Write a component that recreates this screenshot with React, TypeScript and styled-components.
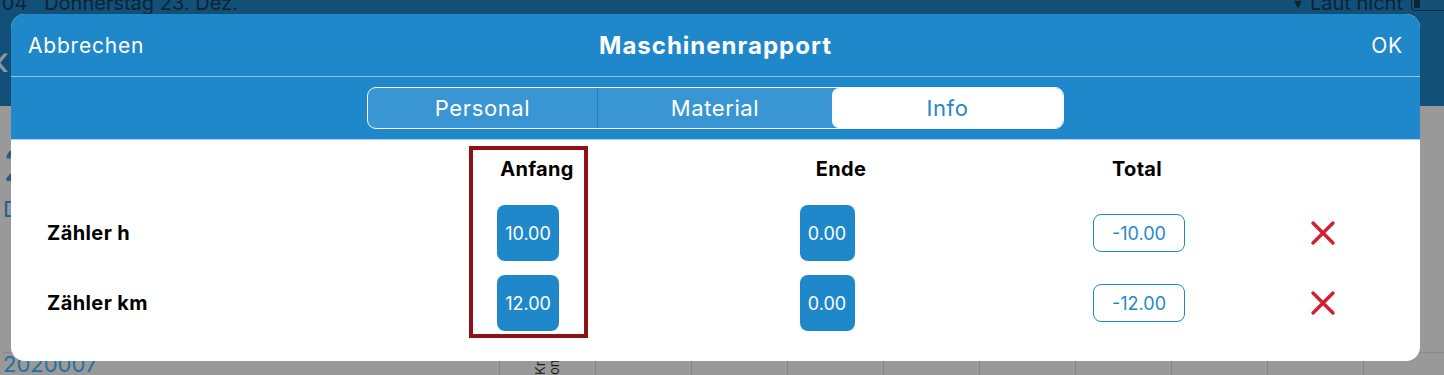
import styled, { createGlobalStyle } from "styled-components";

const GlobalStyle = createGlobalStyle`
  html, body {
    margin: 0;
    padding: 0;
    background: #999999;
    font-family: Inter, "Noto Sans", sans-serif;
  }
`;

const BLUE = "#1f88ca";

type Counter = {
  label: string;
  start: string;
  end: string;
  total: string;
};

const counters: Counter[] = [
  { label: "Zähler h", start: "10.00", end: "0.00", total: "-10.00" },
  { label: "Zähler km", start: "12.00", end: "0.00", total: "-12.00" },
];

const tabs = ["Personal", "Material", "Info"];

function CloseIcon() {
  return (
    <svg width="26" height="26" viewBox="0 0 26 26">
      <path
        d="M3 3 L23 23 M23 3 L3 23"
        stroke="#d3202f"
        strokeWidth="3.4"
        strokeLinecap="round"
      />
    </svg>
  );
}

export default function App() {
  return (
    <>
      <GlobalStyle />
      <Screen>
        <TopBar>
          <StatusRow>
            <StatusText>:04&nbsp;&nbsp;&nbsp;Donnerstag 23. Dez.</StatusText>
            <StatusText>
              <SilentIcon>▾</SilentIcon> Laut nicht <Battery />
            </StatusText>
          </StatusRow>
          <BackChevron>‹</BackChevron>
        </TopBar>
        <BackContent>
          <BackBig>2</BackBig>
          <BackSmall>D</BackSmall>
          <BackFooter>
            <BackNumber>2020007</BackNumber>
            {Array.from({ length: 10 }).map((_, i) => (
              <BackCell key={i}>
                {i === 0 && <VerticalLabel>Kra on</VerticalLabel>}
              </BackCell>
            ))}
          </BackFooter>
        </BackContent>

        <Modal>
          <Header>
            <HeaderButton>Abbrechen</HeaderButton>
            <Title>Maschinenrapport</Title>
            <HeaderButton $right>OK</HeaderButton>
          </Header>
          <TabBar>
            <Segmented>
              {tabs.map((t, i) => (
                <Segment key={t} $active={t === "Info"} $divider={i === 0}>
                  {t}
                </Segment>
              ))}
            </Segmented>
          </TabBar>
          <Body>
            <Highlight />
            <ColHead $col={2} $shift={9}>
              Anfang
            </ColHead>
            <ColHead $col={3} $shift={14}>
              Ende
            </ColHead>
            <ColHead $col={4} $shift={-2}>
              Total
            </ColHead>
            {counters.map((c, i) => (
              <Row key={c.label}>
                <RowLabel $row={i + 2}>{c.label}</RowLabel>
                <Cell $row={i + 2} $col={2}>
                  <ValueBox>{c.start}</ValueBox>
                </Cell>
                <Cell $row={i + 2} $col={3}>
                  <ValueBox>{c.end}</ValueBox>
                </Cell>
                <Cell $row={i + 2} $col={4}>
                  <TotalBox>{c.total}</TotalBox>
                </Cell>
                <Cell $row={i + 2} $col={5} $shift={5}>
                  <CloseIcon />
                </Cell>
              </Row>
            ))}
          </Body>
        </Modal>
      </Screen>
    </>
  );
}

const Screen = styled.div`
  position: relative;
  width: 1444px;
  height: 375px;
  overflow: hidden;
  display: flex;
  flex-direction: column;
`;

const TopBar = styled.div`
  height: 106px;
  flex-shrink: 0;
  background: #135078;
  display: flex;
  flex-direction: column;
`;

const StatusRow = styled.div`
  display: flex;
  justify-content: space-between;
  height: 14px;
  overflow: hidden;
`;

const StatusText = styled.div`
  font-size: 20px;
  color: #0b2436;
  margin-top: -8px;
  display: flex;
  gap: 6px;
  align-items: center;
  margin-left: -4px;
  white-space: nowrap;
`;

const SilentIcon = styled.span`
  font-size: 16px;
  margin-right: 2px;
`;

const Battery = styled.span`
  display: inline-block;
  flex-shrink: 0;
  width: 60px;
  height: 14px;
  margin-right: -29px;
  margin-left: 2px;
  border: 1.5px solid #0b2436;
  border-radius: 4px;
  position: relative;
  &::before {
    content: "";
    position: absolute;
    left: 2px;
    top: 2px;
    width: 6px;
    height: 10px;
    border-radius: 1px;
    background: #0b2436;
  }
`;

const BackChevron = styled.div`
  margin: 32px 0 0 -6px;
  font-size: 40px;
  line-height: 30px;
  color: #8c9aa6;
`;

const BackContent = styled.div`
  flex: 1;
  background: #999999;
  display: flex;
  flex-direction: column;
  padding-left: 3px;
`;

const BackBig = styled.div`
  font-size: 44px;
  color: #1f5f8c;
  margin-top: 34px;
  line-height: 50px;
`;

const BackSmall = styled.div`
  font-size: 22px;
  color: #1f5f8c;
  margin-top: 6px;
`;

const BackFooter = styled.div`
  margin-top: auto;
  display: flex;
  height: 22px;
  border-top: 1px solid #8a8a8a;
`;

const BackNumber = styled.div`
  width: 496px;
  flex-shrink: 0;
  font-size: 22px;
  color: #2471a6;
  line-height: 26px;
  margin-top: -2px;
`;

const BackCell = styled.div`
  width: 95px;
  flex-shrink: 0;
  border-left: 1px solid #858585;
  display: flex;
  justify-content: center;
  align-items: flex-end;
  overflow: hidden;
`;

const VerticalLabel = styled.div`
  writing-mode: vertical-rl;
  transform: rotate(180deg);
  font-size: 13px;
  line-height: 14px;
  height: 22px;
  color: #1a1a1a;
  width: 30px;
  overflow: hidden;
`;

const Modal = styled.div`
  position: absolute;
  left: 11px;
  top: 14px;
  width: 1409px;
  height: 347px;
  border-radius: 14px;
  background: #ffffff;
  overflow: hidden;
  display: flex;
  flex-direction: column;
`;

const Header = styled.div`
  height: 62px;
  flex-shrink: 0;
  background: ${BLUE};
  border-bottom: 1px solid #8cc4ea;
  display: flex;
  align-items: center;
  justify-content: space-between;
  padding: 0 17px;
  color: #ffffff;
`;

const HeaderButton = styled.div<{ $right?: boolean }>`
  font-size: 21px;
  font-weight: 400;
  text-align: ${(p) => (p.$right ? "right" : "left")};
  width: 180px;
  letter-spacing: 0.8px;
`;

const Title = styled.div`
  font-size: 24px;
  font-weight: 700;
  letter-spacing: 1px;
`;

const TabBar = styled.div`
  height: 62px;
  flex-shrink: 0;
  background: ${BLUE};
  border-bottom: 1px solid #a6d3f1;
  display: flex;
  justify-content: center;
  align-items: center;
`;

const Segmented = styled.div`
  width: 697px;
  height: 42px;
  box-sizing: border-box;
  border: 1.5px solid #ffffff;
  border-radius: 9px;
  background: #3996d2;
  display: grid;
  grid-template-columns: 230px 234px 1fr;
  overflow: hidden;
`;

const Segment = styled.div<{ $active?: boolean; $divider?: boolean }>`
  display: flex;
  align-items: center;
  justify-content: center;
  font-size: 22px;
  letter-spacing: 0.6px;
  color: ${(p) => (p.$active ? BLUE : "#ffffff")};
  background: ${(p) => (p.$active ? "#ffffff" : "transparent")};
  border-radius: ${(p) => (p.$active ? "7px" : "0")};
  border-right: ${(p) => (p.$divider ? "1px solid #2b7fb6" : "none")};
  box-sizing: border-box;
`;

const Body = styled.div`
  flex: 1;
  display: grid;
  grid-template-columns: 417px 128px 470px 154px 1fr;
  grid-template-rows: 52px 70px 70px;
  padding: 6px 0 0 36px;
  align-content: start;
`;

const Highlight = styled.div`
  grid-column: 2;
  grid-row: 1 / span 3;
  margin: 0 4px 0 5px;
  border: 4px solid #8e1116;
  pointer-events: none;
`;

const ColHead = styled.div<{ $col: number; $shift: number }>`
  grid-row: 1;
  grid-column: ${(p) => p.$col};
  align-self: start;
  line-height: 46px;
  text-align: center;
  font-size: 20px;
  font-weight: 700;
  letter-spacing: 0.3px;
  color: #000000;
  padding-left: ${(p) => Math.max(p.$shift, 0) * 2}px;
  padding-right: ${(p) => Math.max(-p.$shift, 0) * 2}px;
`;

const Row = styled.div`
  display: contents;
`;

const RowLabel = styled.div<{ $row: number }>`
  grid-row: ${(p) => p.$row};
  grid-column: 1;
  display: flex;
  align-items: center;
  font-size: 20px;
  font-weight: 700;
  letter-spacing: 0.4px;
  color: #000000;
`;

const Cell = styled.div<{ $row: number; $col: number; $shift?: number }>`
  grid-row: ${(p) => p.$row};
  grid-column: ${(p) => p.$col};
  display: flex;
  align-items: center;
  justify-content: center;
  padding-left: ${(p) => (p.$shift ?? 0) * 2}px;
`;

const ValueBox = styled.div`
  height: 56px;
  min-width: 55px;
  padding: 0 8px;
  box-sizing: border-box;
  border-radius: 8px;
  background: ${BLUE};
  color: #ffffff;
  font-size: 18px;
  display: flex;
  align-items: center;
  justify-content: center;
`;

const TotalBox = styled.div`
  height: 38px;
  padding: 0 18px;
  box-sizing: border-box;
  border: 1.5px solid ${BLUE};
  border-radius: 8px;
  color: ${BLUE};
  font-size: 18px;
  display: flex;
  align-items: center;
  justify-content: center;
`;
